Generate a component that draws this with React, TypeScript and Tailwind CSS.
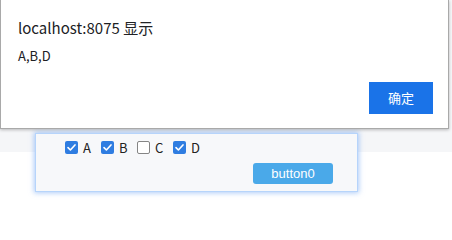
import { useState } from "react";

const options = ["A", "B", "C", "D"];

function Box({ checked }: { checked: boolean }) {
  return checked ? (
    <span className="flex h-[13px] w-[13px] items-center justify-center rounded-[2px] bg-[#2f7de1]">
      <svg viewBox="0 0 12 12" className="h-[11px] w-[11px]">
        <path d="M2.2 6.2 L4.8 8.7 L9.8 3.2" fill="none" stroke="#fff" strokeWidth="1.8" strokeLinecap="round" strokeLinejoin="round" />
      </svg>
    </span>
  ) : (
    <span className="h-[13px] w-[13px] rounded-[2px] border border-[#858585] bg-white" />
  );
}

export default function App() {
  const [picked] = useState<Record<string, boolean>>({ A: true, B: true, C: false, D: true });

  return (
    <div className="relative h-[234px] w-[452px] overflow-hidden bg-white font-['Noto_Sans_CJK_SC','Noto_Sans',sans-serif]">
      {/* page behind the alert */}
      <div className="h-[152px] bg-[#f5f6f8]" />
      <div className="-mt-[19px] ml-[35px] h-[59px] w-[323px] border border-[#b6d4fb] bg-[#f7f8fa] shadow-[0_0_5px_1px_rgba(120,170,245,0.6)]">
        <div className="flex items-center pl-[29px] pt-[6px] text-[13px] leading-[15px] text-[#222]">
          {options.map((o) => (
            <label key={o} className="flex w-[36px] items-center gap-[5px]">
              <Box checked={picked[o]} />
              <span>{o}</span>
            </label>
          ))}
        </div>
        <div className="flex justify-end pr-[24px] pt-[8px]">
          <button className="h-[21px] w-[80px] rounded-[3px] bg-[#4aa9e9] text-[13px] leading-[21px] text-white font-['Liberation_Sans',sans-serif]">
            button0
          </button>
        </div>
      </div>

      {/* alert dialog */}
      <div className="absolute left-0 top-0 h-[129px] w-[449px] border-b border-l border-r border-[#a9a9a9] bg-white shadow-[0_1px_3px_rgba(0,0,0,0.25)]">
        <div className="pl-[17px] pt-[17px] text-[15px] leading-[22px] text-[#202124]">localhost:8075 显示</div>
        <div className="pl-[17px] pt-[8px] text-[13px] leading-[18px] text-[#202124]">A,B,D</div>
        <div className="mt-[17px] flex justify-end pr-[15px]">
          <button className="h-[32px] w-[64px] bg-[#1a73e8] text-[13px] text-white">确定</button>
        </div>
      </div>
    </div>
  );
}
